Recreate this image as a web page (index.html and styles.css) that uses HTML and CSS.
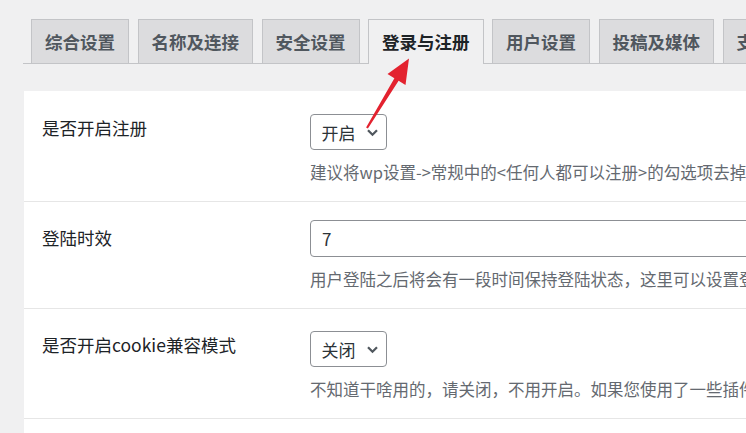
FILE: index.html
```html
<!DOCTYPE html>
<html lang="zh-CN">
<head>
<meta charset="utf-8">
<title>登录与注册</title>
<link rel="stylesheet" href="styles.css">
</head>
<body>
<div class="wrap">
  <nav class="tabs">
    <a class="tab">综合设置</a>
    <a class="tab">名称及连接</a>
    <a class="tab">安全设置</a>
    <a class="tab active">登录与注册</a>
    <a class="tab">用户设置</a>
    <a class="tab">投稿及媒体</a>
    <a class="tab">支付设置</a>
  </nav>
  <div class="panel">
    <div class="row">
      <div class="label">是否开启注册</div>
      <div class="field">
        <div class="select"><span>开启</span><svg class="chev" width="11" height="8" viewBox="0 0 11 8"><polyline points="1,1.2 5.5,5.8 10,1.2" fill="none" stroke="#50575e" stroke-width="2.2"/></svg></div>
        <p class="desc">建议将wp设置-&gt;常规中的&lt;任何人都可以注册&gt;的勾选项去掉，不然会有大量垃圾注册</p>
      </div>
    </div>
    <div class="row">
      <div class="label">登陆时效</div>
      <div class="field">
        <div class="input">7</div>
        <p class="desc">用户登陆之后将会有一段时间保持登陆状态，这里可以设置登陆状态保持的天数</p>
      </div>
    </div>
    <div class="row">
      <div class="label">是否开启cookie兼容模式</div>
      <div class="field">
        <div class="select"><span>关闭</span><svg class="chev" width="11" height="8" viewBox="0 0 11 8"><polyline points="1,1.2 5.5,5.8 10,1.2" fill="none" stroke="#50575e" stroke-width="2.2"/></svg></div>
        <p class="desc">不知道干啥用的，请关闭，不用开启。如果您使用了一些插件导致无法登录，请开启此项</p>
      </div>
    </div>
  </div>
</div>
<svg class="arrow" width="746" height="433" viewBox="0 0 746 433">
  <polygon points="409,58.5 405.5,85 398.6,80.8 367.9,128.5 366.1,127.5 394.4,78.2 387.5,74" fill="#e3222f"/>
</svg>
</body>
</html>
```
FILE: styles.css
```css
html, body {
  margin: 0;
  padding: 0;
  background: #f0f0f1;
  overflow: hidden;
  width: 746px;
  height: 433px;
}
body {
  font-family: "Noto Sans CJK SC", "Noto Sans", sans-serif;
  color: #1d2327;
  position: relative;
}
.wrap {
  padding: 19px 0 0 23px;
  width: 1200px;
}
.tabs {
  display: flex;
  align-items: flex-end;
  border-bottom: 1px solid #c3c4c7;
  padding-left: 8px;
  height: 44px;
}
.tab {
  flex-shrink: 0;
  display: block;
  margin-left: 8.5px;
  padding: 0 13px;
  height: 43px;
  line-height: 43px;
  border: 1px solid #c3c4c7;
  border-bottom: none;
  background: #dcdcde;
  color: #50575e;
  font-size: 17.5px;
  font-weight: 700;
  white-space: nowrap;
}
.tab:first-child {
  margin-left: 0;
}
.tab.active {
  background: #f0f0f1;
  color: #1d2327;
  height: 44px;
  margin-bottom: -1px;
}
.panel {
  margin: 27px 0 0 1px;
  padding: 1px 0 0 18px;
  background: #fff;
  height: 400px;
}
.row {
  display: grid;
  grid-template-columns: 268px 1fr;
  border-bottom: 1px solid #e6e6e6;
  margin-left: -18px;
  padding-left: 18px;
}
.label {
  padding-top: 23px;
  line-height: 25px;
  font-size: 17.5px;
  color: #1d2327;
  white-space: nowrap;
}
.field {
  padding: 18px 0 18px 0;
}
.select {
  box-sizing: border-box;
  margin-top: 4px;
  width: 77px;
  height: 36px;
  border: 1px solid #8c8f94;
  border-radius: 4px;
  display: flex;
  align-items: center;
  padding-left: 10.5px;
  font-size: 17px;
  color: #2c3338;
}
.chev {
  margin-left: 11px;
  margin-top: 2px;
}
.input {
  box-sizing: border-box;
  width: 640px;
  height: 37px;
  border: 1px solid #8c8f94;
  border-radius: 4px;
  padding-left: 11px;
  line-height: 35px;
  font-size: 17px;
  color: #2c3338;
}
.desc {
  margin: 11px 0 0 0;
  line-height: 22px;
  font-size: 16.5px;
  color: #646970;
  white-space: nowrap;
}
.arrow {
  position: absolute;
  left: 0;
  top: 0;
  pointer-events: none;
}
```
